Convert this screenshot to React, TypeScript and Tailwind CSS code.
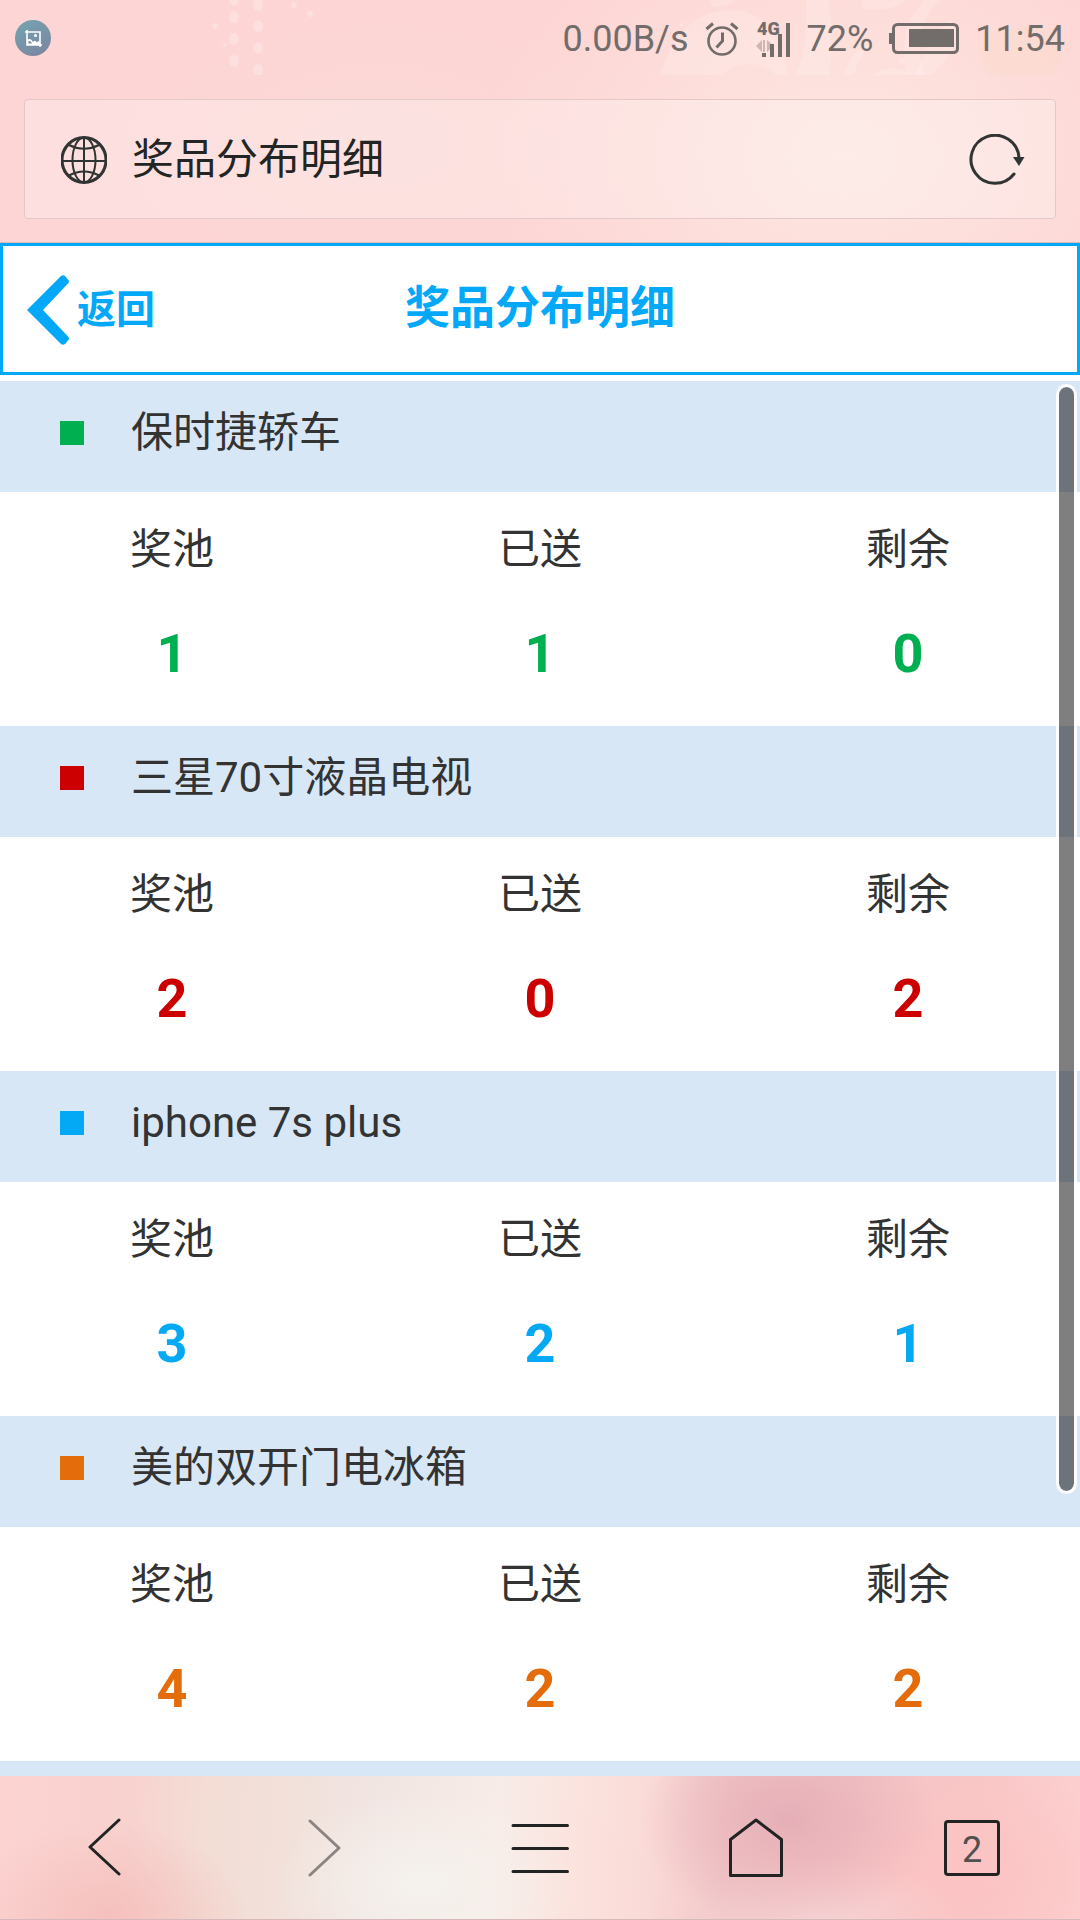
type Prize = {
  name: string;
  pool: number;
  given: number;
  left: number;
  fill: string;
  text: string;
};

const prizes: Prize[] = [
  { name: "保时捷轿车", pool: 1, given: 1, left: 0, fill: "bg-[#00b050]", text: "text-[#00b050]" },
  { name: "三星70寸液晶电视", pool: 2, given: 0, left: 2, fill: "bg-[#cc0000]", text: "text-[#cc0000]" },
  { name: "iphone 7s plus", pool: 3, given: 2, left: 1, fill: "bg-[#03a9f4]", text: "text-[#03a9f4]" },
  { name: "美的双开门电冰箱", pool: 4, given: 2, left: 2, fill: "bg-[#e46c0a]", text: "text-[#e46c0a]" },
];

function Wallpaper() {
  return (
    <svg
      className="pointer-events-none absolute top-0 left-0 h-[75px] w-full"
      viewBox="0 0 1080 75"
      preserveAspectRatio="none"
      aria-hidden="true"
    >
      <g fill="#fff" fillOpacity="0.24">
        {[0, 17, 39, 61].map((y) => (
          <ellipse key={y} cx="234" cy={y} rx="5" ry="6" />
        ))}
        {[5, 26, 48, 70].map((y) => (
          <ellipse key={y} cx="258" cy={y} rx="5" ry="6" />
        ))}
        <circle cx="294" cy="5" r="3" />
        <circle cx="310" cy="14" r="3" />
        <circle cx="215" cy="26" r="3" />
        <circle cx="225" cy="45" r="2" />
        <circle cx="902" cy="61" r="3" />
        <circle cx="681" cy="25" r="2" />
      </g>
      <g fill="#fff" fillOpacity="0.18">
        <path d="M660 75C672 35 695 10 730 10C768 10 780 40 788 75H776C766 62 738 60 722 75Z" />
        <path d="M806 0H829C832 25 832 50 830 75H796C806 50 808 25 806 0Z" />
        <path d="M710 0H735C732 5 722 8 712 6Z" />
        <path d="M862 8C878 12 896 9 906 0H862Z" />
        <path d="M925 0H940C918 20 916 45 924 75H908C900 45 905 18 925 0Z" />
        <path d="M950 20C966 35 948 62 930 75H916C925 50 935 30 950 20Z" />
        <path d="M844 75C850 55 862 45 874 42C862 52 856 64 854 75Z" />
        <path d="M872 75C884 66 904 66 912 75Z" />
      </g>
      <path d="M985 40C1010 20 1050 25 1062 40C1066 55 1058 68 1052 75H988C980 65 978 50 985 40Z" fill="#fbdcc4" fillOpacity="0.3" />
    </svg>
  );
}

function StatusBar() {
  return (
    <div className="relative flex h-[75px] items-center justify-between pr-[15px] pl-[15px] font-[Roboto,sans-serif] text-[36px] leading-[42px] text-[#726c6a]">
      <svg width="36" height="36" viewBox="0 0 36 36" fill="none" aria-hidden="true">
        <defs>
          <linearGradient id="badge" x1="0.2" y1="0" x2="0.8" y2="1">
            <stop offset="0" stopColor="#74a2b0" />
            <stop offset="1" stopColor="#7c86a0" />
          </linearGradient>
        </defs>
        <circle cx="18" cy="18" r="18" fill="url(#badge)" />
        <path d="M12 10V25H27M10 12H25V27" stroke="#fff" strokeWidth="1.6" />
        <circle cx="20.5" cy="15.5" r="1.5" fill="#fff" />
        <path d="M12 20.500C14.500 18 16 19 18 22C19.500 19.500 21 21 22 22.500C23 20.500 24 21 25 22V25H12Z" fill="#fff" />
        <path d="M13.300 21.500C15 20 16 21.500 17 23.500H13.300Z" fill="#7c93a8" />
      </svg>

      <div className="flex items-center pt-0.5">
        <span>0.00B/s</span>
        <svg className="ml-4" width="34" height="36" viewBox="0 0 34 36" fill="none" stroke="currentColor" aria-hidden="true">
          <circle cx="17" cy="20" r="13.500" strokeWidth="2.600" />
          <path d="M17.500 11.500V20L11.500 26.500" strokeWidth="3" />
          <path d="M1.500 8L8 2.500M26 2.500L32.500 8" strokeWidth="3" />
        </svg>
        <svg className="ml-4 overflow-visible" width="36" height="36" viewBox="0 0 36 36" aria-hidden="true">
          <text x="2" y="14" fontFamily="Roboto, sans-serif" fontSize="18" fontWeight="900" fill="currentColor">4G</text>
          <path d="M1 25L7 19V31ZM9 19H10V31H8V19ZM12 19L19 25L12 31Z" fill="#cdb6b4" />
          <path d="M7 32H11V36H7ZM15 23H19V36H15ZM23 13H27V36H23ZM31 2H35V36H31Z" fill="currentColor" />
        </svg>
        <span className="ml-4">72%</span>
        <svg className="ml-4" width="70" height="32" viewBox="0 0 70 32" fill="none" aria-hidden="true">
          <rect x="4.500" y="1.500" width="64" height="28" rx="4" stroke="currentColor" strokeWidth="3" />
          <path d="M0 10H4V21H0ZM20 6H65V24H20Z" fill="currentColor" />
        </svg>
        <span className="ml-4">11:54</span>
      </div>
    </div>
  );
}

function AddressBar() {
  return (
    <div className="relative mx-6 mt-6 flex h-[120px] items-center rounded border border-[#e2c8c8] bg-white/25 pt-0.5 pr-[30px] pl-9">
      <svg className="shrink-0" width="46" height="48" viewBox="0 0 46 48" fill="none" stroke="#303432" aria-hidden="true">
        <ellipse cx="23" cy="24" rx="22" ry="22.500" strokeWidth="3" />
        <ellipse cx="23" cy="24" rx="11.500" ry="22.500" strokeWidth="2" />
        <path d="M23 1V47M1 25H45" strokeWidth="2" />
        <path d="M8 9Q23 16.500 38 9M8 39.500Q23 31.500 38 39.500" strokeWidth="2" />
      </svg>
      <span className="ml-[25px] grow text-[42px] leading-[60px] text-[#222524]">奖品分布明细</span>
      <button type="button" aria-label="刷新" className="shrink-0">
        <svg width="56" height="52" viewBox="0 0 56 52" fill="none" aria-hidden="true">
          <path d="M50 24A24 24 0 1 0 45 40" stroke="#303432" strokeWidth="3" strokeLinecap="round" />
          <path d="M44 23H55.500L50 32Z" fill="#303432" />
        </svg>
      </button>
    </div>
  );
}

function PageHeader() {
  return (
    <header className="grid h-[132px] shrink-0 grid-cols-[1fr_auto_1fr] items-center border-3 border-[#03a9f8] px-6 text-[#03a9f8]">
      <a href="#back" className="flex items-center pt-0.5 text-[39px] leading-[54px] font-bold">
        <svg width="42" height="70" viewBox="0 0 42 70" aria-hidden="true">
          <path d="M34 1Q36 -0.500 38 1L41 4.500Q43 6.500 41 8.500L16 35L41 61.500Q43 63.500 41 65.500L38 69Q36 70.500 34 69L0 35Z" fill="currentColor" />
        </svg>
        <span className="ml-2">返回</span>
      </a>
      <h1 className="text-[45px] leading-[64px] font-bold">奖品分布明细</h1>
    </header>
  );
}

function PrizeSection({ prize }: { prize: Prize }) {
  const cell = `p-0 text-center text-[54px] leading-[84px] font-bold ${prize.text}`;
  return (
    <section className="shrink-0">
      <h2 className="flex h-[111px] items-center bg-[#d8e7f6] pb-2 pl-[60px] text-[42px] leading-[60px] font-normal">
        <span className={`size-6 ${prize.fill}`} />
        <span className="ml-[47px]">{prize.name}</span>
      </h2>
      <div className="h-[234px] px-[130px] pt-7">
        <table className="w-full border-collapse">
          <thead>
            <tr className="text-[42px] leading-[60px]">
              <th scope="col" className="w-[84px] p-0 font-normal whitespace-nowrap">奖池</th>
              <th scope="col" className="p-0 font-normal">已送</th>
              <th scope="col" className="w-[84px] p-0 font-normal whitespace-nowrap">剩余</th>
            </tr>
          </thead>
          <tbody>
            <tr>
              <td className={cell}><span className="block pt-8">{prize.pool}</span></td>
              <td className={cell}><span className="block pt-8">{prize.given}</span></td>
              <td className={cell}><span className="block pt-8">{prize.left}</span></td>
            </tr>
          </tbody>
        </table>
      </div>
    </section>
  );
}

function BottomBar() {
  const button = "flex items-center justify-center";
  return (
    <nav
      className="grid h-36 shrink-0 grid-cols-5 border-b border-[#d6babb] bg-[#f8cfcd] bg-[radial-gradient(150px_110px_at_73%_30%,#e6afb7_0%,#e6afb700_100%),radial-gradient(140px_60px_at_76%_100%,#f6d3d4_0%,#f6d3d400_100%),radial-gradient(200px_110px_at_88%_70%,#fcc3c3_0%,#fcc3c300_100%),radial-gradient(150px_90px_at_39%_75%,#f5f2ed_0%,#f5f2ed00_100%),radial-gradient(140px_100px_at_10%_100%,#f5c0bd_0%,#f5c0bd00_100%),linear-gradient(95deg,#fcd3d1_0%,#f8d2cf_12%,#f3ddd5_19%,#f2e0d9_26%,#f1e5e2_34%,#f8ece8_46%,#fbe3de_53%,#fadad7_60%,#f2c8c9_67%,#f3c5c6_78%,#f9c6c6_90%,#fdd0d0_100%)] text-[#222424]"
      aria-label="浏览器工具栏"
    >
      <button type="button" aria-label="后退" className={button}>
        <svg width="40" height="60" viewBox="0 0 40 60" fill="none" stroke="currentColor" strokeWidth="3" strokeLinecap="round" strokeLinejoin="round" aria-hidden="true">
          <path d="M31 2L2 29L31 56" />
        </svg>
      </button>
      <button type="button" aria-label="前进" className={`${button} text-[#8b8582]`}>
        <svg width="34" height="60" viewBox="0 0 34 60" fill="none" stroke="currentColor" strokeWidth="3" strokeLinecap="round" strokeLinejoin="round" aria-hidden="true">
          <path d="M3 3L32 30L3 57" />
        </svg>
      </button>
      <button type="button" aria-label="菜单" className={button}>
        <svg width="58" height="50" viewBox="0 0 58 50" fill="none" stroke="currentColor" strokeWidth="3" strokeLinecap="round" aria-hidden="true">
          <path d="M2 2.500H56.500M2 25.500H56.500M2 48.500H56.500" />
        </svg>
      </button>
      <button type="button" aria-label="主页" className={button}>
        <svg width="54" height="60" viewBox="0 0 54 60" fill="none" stroke="currentColor" strokeWidth="3" strokeLinejoin="round" aria-hidden="true">
          <path d="M1.500 21.500L27 2L52.500 21.500V57.500H1.500Z" />
        </svg>
      </button>
      <button type="button" aria-label="标签页" className={button}>
        <span className="flex size-14 items-center justify-center rounded border-3 font-[Roboto,sans-serif] text-[36px] leading-[46px]">
          <span className="pt-1 text-[#505050]">2</span>
        </span>
      </button>
    </nav>
  );
}

export default function App() {
  return (
    <div className="flex h-screen flex-col overflow-hidden bg-white font-[Roboto,'Noto_Sans_CJK_SC',sans-serif] text-[#333]">
      <div className="relative h-[243px] shrink-0 border-b border-[#e0b8ba] bg-[#fdd5d4] bg-[radial-gradient(360px_260px_at_78%_65%,#fde6e1_0%,#fde1dcbb_50%,#fde1dc00_100%),radial-gradient(300px_160px_at_35%_60%,#fad8d6_0%,#fad8d600_100%)]">
        <Wallpaper />
        <StatusBar />
        <AddressBar />
      </div>
      <PageHeader />
      <main className="relative mt-1.5 flex min-h-0 grow flex-col overflow-hidden">
        {prizes.map((prize) => (
          <PrizeSection key={prize.name} prize={prize} />
        ))}
        <div className="grow bg-[#d8e7f6]" />
        <div className="absolute top-[3px] right-[3px] bottom-[282px] w-[21px] rounded-full border-3 border-white/90 bg-black/50 bg-clip-padding" />
      </main>
      <BottomBar />
    </div>
  );
}
